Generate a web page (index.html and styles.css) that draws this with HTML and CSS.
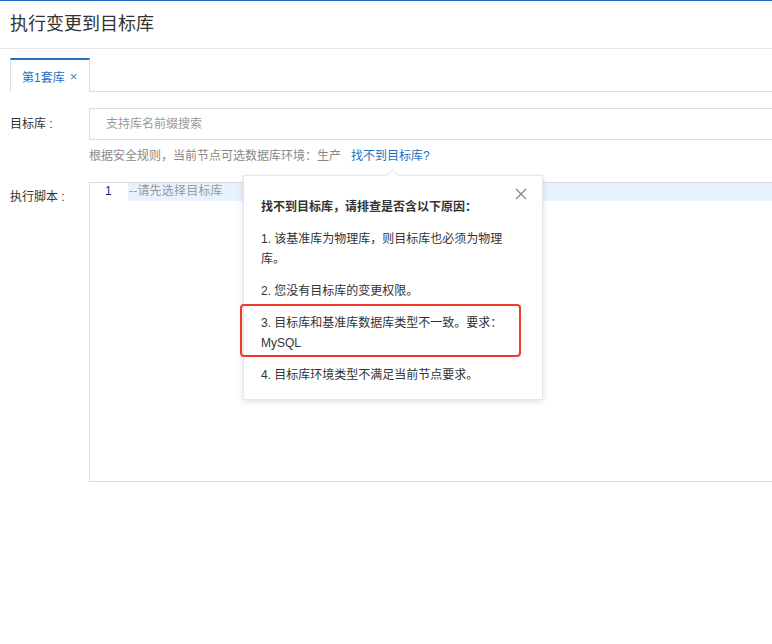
FILE: index.html
```html
<!DOCTYPE html>
<html lang="zh-CN">
<head>
<meta charset="utf-8">
<title>执行变更到目标库</title>
<link rel="stylesheet" href="styles.css">
</head>
<body>
<div class="topline"></div>
<header class="header">
  <h1 class="title">执行变更到目标库</h1>
</header>
<div class="tabbar">
  <div class="tab active">第1套库<span class="tab-close">×</span></div>
  <div class="tab-rest"></div>
</div>
<div class="form">
  <div class="row">
    <label class="label">目标库 :</label>
    <div class="control">
      <div class="input">支持库名前缀搜索</div>
      <div class="help">根据安全规则，当前节点可选数据库环境：生产<span class="link">找不到目标库?</span></div>
    </div>
  </div>
  <div class="row row-script">
    <label class="label">执行脚本 :</label>
    <div class="control">
      <div class="editor">
        <div class="line">
          <span class="gutter">1</span>
          <span class="code">--请先选择目标库</span>
        </div>
      </div>
    </div>
  </div>
</div>
<div class="popover">
  <span class="arrow"></span>
  <span class="pop-close">
    <svg width="12" height="12" viewBox="0 0 12 12"><path d="M1 1L11 11M11 1L1 11" stroke="#888" stroke-width="1.3" fill="none"/></svg>
  </span>
  <p class="pop-title">找不到目标库，请排查是否含以下原因：</p>
  <p class="pop-item">1. 该基准库为物理库，则目标库也必须为物理库。</p>
  <p class="pop-item">2. 您没有目标库的变更权限。</p>
  <p class="pop-item mark">3. 目标库和基准库数据库类型不一致。要求：MySQL</p>
  <p class="pop-item">4. 目标库环境类型不满足当前节点要求。</p>
</div>
</body>
</html>
```

FILE: styles.css
```css
* { box-sizing: border-box; }
html, body { margin: 0; padding: 0; background: #fff; }
body {
  font-family: "Liberation Sans", "Noto Sans CJK SC", sans-serif;
  font-size: 12px;
  color: #333;
  width: 772px;
  height: 644px;
  overflow: hidden;
  position: relative;
}
.topline { height: 1px; background: #1f70c4; }
.header {
  height: 48px;
  border-bottom: 1px solid #e8e8e8;
  padding-left: 10px;
  display: flex;
  align-items: center;
}
.title {
  margin: 0;
  font-size: 18px;
  font-weight: normal;
  color: #333;
  line-height: 24px;
  margin-top: -2px;
}
.tabbar {
  display: flex;
  padding: 9px 0 0 10px;
  height: 43px;
}
.tab {
  width: 80px;
  height: 34px;
  border-top: 2px solid #1f70c4;
  border-left: 1px solid #ddd;
  border-right: 1px solid #ddd;
  color: #1f70c4;
  font-size: 12px;
  padding-left: 11px;
  padding-top: 1px;
  display: flex;
  align-items: center;
}
.tab-close { margin-left: 5px; font-size: 13px; color: #3a7fd0; }
.tab-rest { flex: 1; border-bottom: 1px solid #ddd; height: 34px; }
.form { padding-top: 16px; }
.row { display: flex; }
.label {
  width: 89px;
  padding-left: 10px;
  line-height: 32px;
  color: #333;
  flex: none;
}
.control { flex: 1; min-width: 0; }
.input {
  height: 32px;
  border: 1px solid #dcdcdc;
  border-right: none;
  padding-left: 16px;
  line-height: 30px;
  color: #999;
}
.help {
  margin-top: 8px;
  line-height: 16px;
  color: #888;
}
.link { color: #1f70c4; margin-left: 10px; }
.row-script { margin-top: 18px; }
.row-script .label { line-height: 30px; }
.editor {
  height: 300px;
  border: 1px solid #d9d9d9;
  border-right: none;
}
.line { display: flex; height: 18px; line-height: 17px; }
.gutter {
  width: 38px;
  padding-left: 15px;
  color: #1a2a7a;
  font-size: 12px;
}
.code {
  flex: 1;
  background: #e8f2ff;
  color: #999;
  padding-left: 1px;
  letter-spacing: 0.2px;
}
.popover {
  position: absolute;
  left: 243px;
  top: 175px;
  width: 300px;
  height: 225px;
  background: #fff;
  border: 1px solid #e6e6e6;
  box-shadow: 0 2px 6px rgba(0,0,0,0.12);
  padding: 21px 18px 0 17px;
}
.arrow {
  position: absolute;
  top: -5px;
  left: 144px;
  width: 9px;
  height: 9px;
  background: #fff;
  border-left: 1px solid #e6e6e6;
  border-top: 1px solid #e6e6e6;
  transform: rotate(45deg);
}
.pop-close {
  position: absolute;
  right: 15px;
  top: 12px;
  width: 12px;
  height: 12px;
  display: block;
}
.pop-close svg { display: block; }
.pop-title {
  margin: 0 0 12px;
  font-weight: bold;
  line-height: 20px;
  color: #333;
}
.pop-item {
  margin: 0 0 12px;
  line-height: 20px;
  color: #333;
  padding-right: 6px;
}
.mark { position: relative; }
.mark::after {
  content: "";
  position: absolute;
  left: -21px;
  top: -9px;
  width: 277px;
  height: 49px;
  border: 2px solid #f03a2c;
  border-radius: 4px;
}
```
